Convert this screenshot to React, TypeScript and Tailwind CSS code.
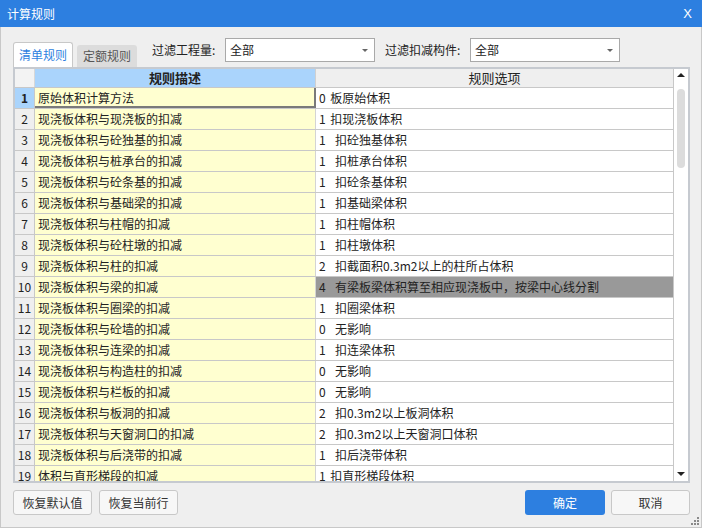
import React from "react";

const rows: [string, string][] = [
  ["原始体积计算方法", "0 板原始体积"],
  ["现浇板体积与现浇板的扣减", "1 扣现浇板体积"],
  ["现浇板体积与砼独基的扣减", "1  扣砼独基体积"],
  ["现浇板体积与桩承台的扣减", "1  扣桩承台体积"],
  ["现浇板体积与砼条基的扣减", "1  扣砼条基体积"],
  ["现浇板体积与基础梁的扣减", "1  扣基础梁体积"],
  ["现浇板体积与柱帽的扣减", "1  扣柱帽体积"],
  ["现浇板体积与砼柱墩的扣减", "1  扣柱墩体积"],
  ["现浇板体积与柱的扣减", "2  扣截面积0.3m2以上的柱所占体积"],
  ["现浇板体积与梁的扣减", "4  有梁板梁体积算至相应现浇板中，按梁中心线分割"],
  ["现浇板体积与圈梁的扣减", "1  扣圈梁体积"],
  ["现浇板体积与砼墙的扣减", "0  无影响"],
  ["现浇板体积与连梁的扣减", "1  扣连梁体积"],
  ["现浇板体积与构造柱的扣减", "0  无影响"],
  ["现浇板体积与栏板的扣减", "0  无影响"],
  ["现浇板体积与板洞的扣减", "2  扣0.3m2以上板洞体积"],
  ["现浇板体积与天窗洞口的扣减", "2  扣0.3m2以上天窗洞口体积"],
  ["现浇板体积与后浇带的扣减", "1  扣后浇带体积"],
  ["体积与直形梯段的扣减", "1 扣直形梯段体积"],
];

function Combo() {
  return (
    <div className="w-[150px] h-[24px] bg-white border border-[#a9a9a9] flex items-center pl-[4px] pr-[6px] text-[12px] text-[#222]">
      <span className="flex-1">全部</span>
      <span className="w-0 h-0 border-l-[3px] border-r-[3px] border-t-[3px] border-l-transparent border-r-transparent border-t-[#666]" />
    </div>
  );
}

export default function App() {
  return (
    <div className="w-[702px] h-[528px] bg-[#efefef] flex flex-col font-['Noto_Sans_CJK_SC',sans-serif] text-[#222] overflow-hidden">
      {/* Title bar */}
      <div className="h-[27px] bg-[#2d7fe0] flex items-center px-[7px] text-white text-[12px] shrink-0">
        <span className="flex-1">计算规则</span>
        <span className="font-['Liberation_Sans',sans-serif] text-[13px] mr-[3px]">X</span>
      </div>

      <div className="flex-1 flex flex-col border-l border-r border-b border-[#c8c8c8] pl-[12px] pr-[11px] relative">
        {/* Top row */}
        <div className="h-[40px] flex items-end shrink-0">
          <div className="w-[60px] h-[25px] bg-white border border-b-0 border-[#c8c8c8] rounded-t-[3px] flex items-center justify-center text-[12px] text-[#2d7fe0]">
            清单规则
          </div>
          <div className="ml-[4px] w-[60px] h-[22px] bg-[#dcdcdc] rounded-t-[3px] flex items-center justify-center text-[12px] text-[#555]">
            定额规则
          </div>
          <div className="self-start mt-[11px] ml-[15px] flex items-center text-[12px]">
            <span className="w-[73px]">过滤工程量:</span>
            <Combo />
            <span className="ml-[10px] w-[85px]">过滤扣减构件:</span>
            <Combo />
          </div>
        </div>

        {/* Grid */}
        <div className="h-[416px] border-2 border-[#c6cad0] flex shrink-0 bg-white">
          <div className="flex-1 flex flex-col overflow-hidden">
            <div className="h-[19px] flex shrink-0 border-b border-[#c8c8c8] text-[13px] leading-[18px]">
              <div className="w-[20px] bg-[#f3f3f3] border-r border-[#d8d8d8]" />
              <div className="w-[281px] bg-[#aad4fc] text-center font-bold border-r border-[#d0d0d0]">规则描述</div>
              <div className="flex-1 bg-[#efefef] text-center border-r border-[#c8c8c8]">规则选项</div>
            </div>
            {rows.map(([a, b], i) => (
              <div key={i} className="h-[21px] flex shrink-0 border-b border-[#c8c8c8] text-[12px] leading-[20px]">
                <div
                  className={
                    i === 0
                      ? "w-[20px] bg-[#aad4fc] border-r border-[#c8c8c8] text-center font-bold"
                      : "w-[20px] bg-[#efefef] border-r border-[#c8c8c8] text-center"
                  }
                >
                  {i + 1}
                </div>
                <div
                  className={
                    i === 0
                      ? "w-[281px] bg-[#ffffd0] border-r-2 border-b-2 border-[#7a7a7a] pl-[3px] leading-[19px] whitespace-pre"
                      : "w-[281px] bg-[#ffffd0] border-r border-[#d4d4d4] pl-[3px] whitespace-pre"
                  }
                >
                  {a}
                </div>
                <div
                  className={
                    i === 9
                      ? "flex-1 bg-[#999999] pl-[3px] border-r border-[#c8c8c8] whitespace-pre [word-spacing:2px]"
                      : "flex-1 bg-white pl-[3px] border-r border-[#c8c8c8] whitespace-pre [word-spacing:2px]"
                  }
                >
                  {b}
                </div>
              </div>
            ))}
          </div>
          {/* Scrollbar */}
          <div className="w-[14px] bg-white flex flex-col items-center shrink-0">
            <div className="mt-[4px] w-0 h-0 border-l-[4px] border-r-[4px] border-b-[4px] border-l-transparent border-r-transparent border-b-[#222]" />
            <div className="mt-[12px] w-[8px] h-[79px] rounded-[4px] bg-[#dcdcdc]" />
            <div className="flex-1" />
            <div className="mb-[5px] w-0 h-0 border-l-[4px] border-r-[4px] border-t-[4px] border-l-transparent border-r-transparent border-t-[#222]" />
          </div>
        </div>

        {/* Buttons */}
        <div className="flex mt-[7px] text-[12px]">
          <button className="w-[79px] h-[25px] bg-[#f7f7f7] border border-[#c8c8c8] rounded-[3px] text-[#333]">恢复默认值</button>
          <button className="ml-[7px] w-[79px] h-[25px] bg-[#f7f7f7] border border-[#c8c8c8] rounded-[3px] text-[#333]">恢复当前行</button>
          <div className="flex-1" />
          <button className="w-[80px] h-[25px] bg-[#2d7fe0] rounded-[3px] text-white">确定</button>
          <button className="ml-[6px] w-[79px] h-[25px] bg-[#f7f7f7] border border-[#c8c8c8] rounded-[3px] text-[#333]">取消</button>
        </div>

        {/* Resize grip */}
        <svg className="absolute right-[1px] bottom-[1px]" width="10" height="10" viewBox="0 0 10 10">
          <rect x="7" y="1" width="2" height="2" fill="#8a8a8a" />
          <rect x="4" y="4" width="2" height="2" fill="#8a8a8a" />
          <rect x="7" y="4" width="2" height="2" fill="#8a8a8a" />
          <rect x="1" y="7" width="2" height="2" fill="#8a8a8a" />
          <rect x="4" y="7" width="2" height="2" fill="#8a8a8a" />
          <rect x="7" y="7" width="2" height="2" fill="#8a8a8a" />
        </svg>
      </div>
    </div>
  );
}
